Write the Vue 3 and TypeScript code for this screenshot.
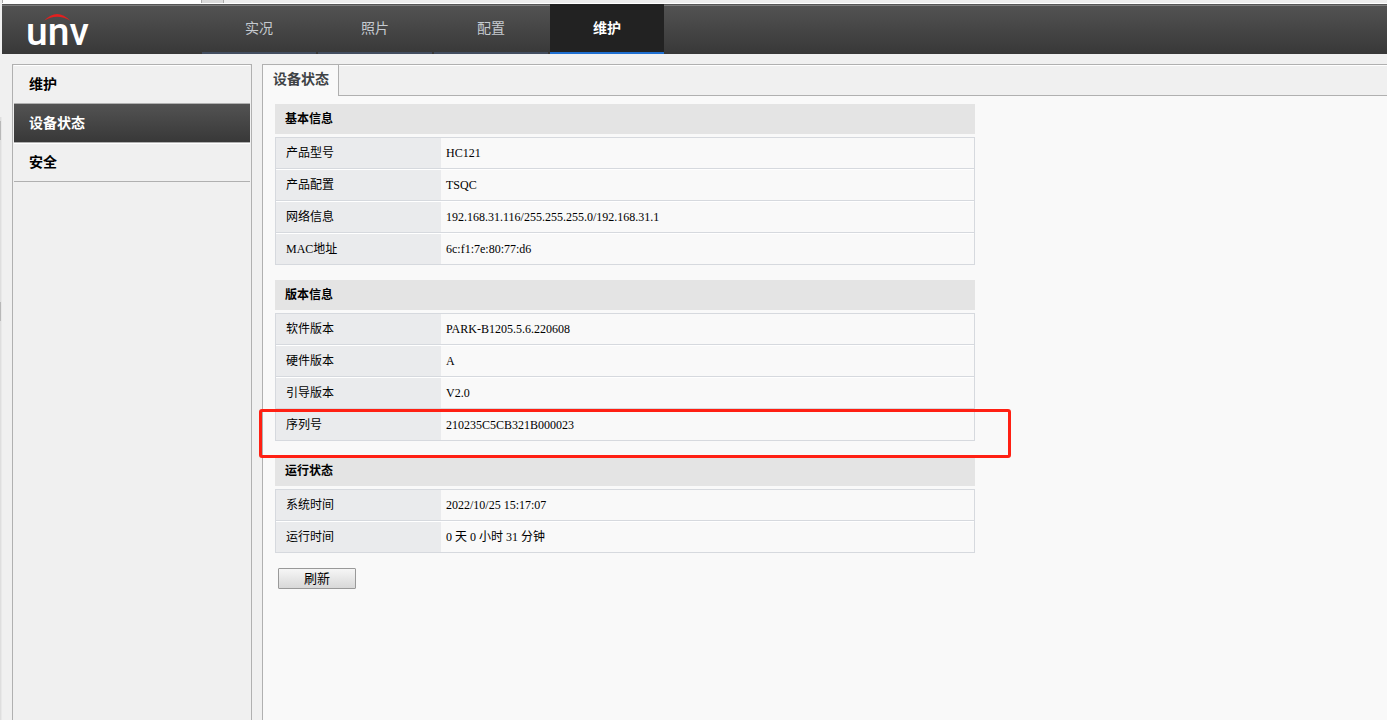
<script setup lang="ts">
import { ref } from 'vue'

interface Row {
  label: string
  value: string
}
interface Section {
  title: string
  rows: Row[]
  marked?: boolean
}

const navItems: string[] = ['实况', '照片', '配置', '维护']
const activeNav = ref('维护')

const menuItems: string[] = ['维护', '设备状态', '安全']
const activeMenu = ref('设备状态')

const sections: Section[] = [
  {
    title: '基本信息',
    rows: [
      { label: '产品型号', value: 'HC121' },
      { label: '产品配置', value: 'TSQC' },
      { label: '网络信息', value: '192.168.31.116/255.255.255.0/192.168.31.1' },
      { label: 'MAC地址', value: '6c:f1:7e:80:77:d6' },
    ],
  },
  {
    title: '版本信息',
    marked: true,
    rows: [
      { label: '软件版本', value: 'PARK-B1205.5.6.220608' },
      { label: '硬件版本', value: 'A' },
      { label: '引导版本', value: 'V2.0' },
      { label: '序列号', value: '210235C5CB321B000023' },
    ],
  },
  {
    title: '运行状态',
    rows: [
      { label: '系统时间', value: '2022/10/25 15:17:07' },
      { label: '运行时间', value: '0 天 0 小时 31 分钟' },
    ],
  },
]
</script>

<template>
  <div class="page">
    <div class="strip"><span class="strip-field"></span><span class="strip-button"></span></div>
    <header class="header">
      <svg class="logo" width="200" height="50" viewBox="2 4 200 50" role="img" aria-label="unv">
        <text class="logo-text" x="26" y="45">unv</text>
        <path d="M44 20.8 Q57 7 70.4 20.8 Q57 12.8 44 20.8 Z" fill="#e3201f" />
      </svg>
      <nav class="nav">
        <a
          v-for="item in navItems"
          :key="item"
          href="#"
          class="nav-item"
          :class="{ active: item === activeNav }"
          @click.prevent="activeNav = item"
        >{{ item }}</a>
      </nav>
    </header>

    <div class="body">
      <div class="gutter"><i class="mark"></i><i class="mark"></i></div>
      <aside class="sidebar">
        <a
          v-for="item in menuItems"
          :key="item"
          href="#"
          class="menu-item"
          :class="{ active: item === activeMenu }"
          @click.prevent="activeMenu = item"
        >{{ item }}</a>
      </aside>

      <main class="main">
        <div class="tabs">
          <a href="#" class="tab" @click.prevent>设备状态</a>
          <div class="tabs-rest"></div>
        </div>
        <div class="content">
          <section v-for="s in sections" :key="s.title" class="section">
            <h2 class="title">{{ s.title }}</h2>
            <table class="info">
              <tbody>
                <tr v-for="r in s.rows" :key="r.label">
                  <th scope="row">{{ r.label }}</th>
                  <td>{{ r.value }}</td>
                </tr>
              </tbody>
            </table>
            <div v-if="s.marked" class="highlight"></div>
          </section>
          <button type="button" class="refresh">刷新</button>
        </div>
      </main>
    </div>
  </div>
</template>

<style>
html,
body,
#app {
  height: 100%;
}
body {
  margin: 0;
  background: #f0f0f0;
}
</style>

<style scoped>
.page {
  box-sizing: border-box;
  min-height: 100%;
  display: flex;
  flex-direction: column;
  overflow: hidden;
  background: #f0f0f0;
  font-family: "Liberation Serif", "Noto Sans CJK SC", serif;
  font-size: 12px;
  color: #000;
}
.strip {
  display: flex;
  height: 3px;
  margin-left: 2px;
  border-bottom: 1px solid #fff;
  background: #ececec;
}
.strip-field {
  box-sizing: border-box;
  width: 199px;
  border-left: 1px solid #aaa;
  background: #fff;
}
.strip-button {
  box-sizing: border-box;
  width: 23px;
  border: 0 solid #aaa;
  border-width: 0 1px;
  background: #dadada;
}
.header {
  box-sizing: border-box;
  display: flex;
  height: 50px;
  margin-left: 2px;
  background: linear-gradient(#555 0 1px, #7c7c7c 1px 2px, #525252 2px, #383838);
}
.logo {
  flex: none;
}
.logo-text {
  font-family: Roboto, sans-serif;
  font-size: 39px;
  font-weight: 500;
  fill: #fff;
}
.nav {
  display: flex;
  gap: 2px;
}
.nav-item {
  box-sizing: border-box;
  width: 114px;
  border-bottom: 2px solid #434e60;
  color: #c5cad0;
  font-size: 14px;
  line-height: 50px;
  text-align: center;
  text-decoration: none;
}
.nav-item.active {
  background: #222;
  border-bottom-color: #1f6fd0;
  color: #fff;
  font-weight: bold;
}
.body {
  flex: 1;
  display: flex;
  padding-top: 10px;
}
.gutter {
  box-sizing: border-box;
  width: 2px;
  margin: 53px 10px 0 0;
  border-right: 1px solid #e8e8e8;
  background: #dedede;
}
.mark {
  display: block;
  height: 19px;
  margin: 4px 0 162px;
  background: #b8b8b8;
}
.sidebar {
  box-sizing: border-box;
  width: 240px;
  flex: none;
  margin-right: 10px;
  padding: 0 1px;
  border: 1px solid #b0b0b0;
  border-bottom: 0;
}
.menu-item {
  display: block;
  height: 37px;
  padding-left: 15px;
  border-top: 1px solid #fff;
  border-bottom: 1px solid #b0b0b0;
  color: #000;
  font-size: 14px;
  font-weight: bold;
  line-height: 37px;
  text-decoration: none;
}
.menu-item.active {
  border-top-color: #525252;
  background: linear-gradient(#525252, #383838);
  color: #fff;
}
.main {
  flex: 1;
  min-width: 0;
  border-left: 1px solid #b0b0b0;
  border-top: 1px solid #b0b0b0;
  background: #f9f9f9;
}
.tabs {
  display: flex;
  height: 31px;
}
.tab {
  padding: 0 9px 0 10px;
  border-right: 1px solid #b0b0b0;
  color: #404346;
  font-size: 14px;
  font-weight: bold;
  line-height: 29px;
  text-decoration: none;
}
.tabs-rest {
  flex: 1;
  border-top: 1px solid #fff;
  border-bottom: 1px solid #b0b0b0;
  background: #f0f0f0;
}
.content {
  max-width: 700px;
  padding: 8px 12px;
}
.section {
  position: relative;
  margin-bottom: 15px;
}
.title {
  margin: 0 0 3px;
  padding-left: 10px;
  background: #e4e4e4;
  font-size: 12px;
  font-weight: bold;
  line-height: 30px;
}
.info {
  width: 100%;
  border: 1px solid #d6d9de;
  border-spacing: 0;
  table-layout: fixed;
}
.info th,
.info td {
  box-sizing: border-box;
  height: 32px;
  padding: 0;
  border-top: 1px solid #fff;
  border-bottom: 1px solid #d6d9de;
  line-height: 30px;
  text-align: left;
  white-space: nowrap;
}
.info th {
  width: 165px;
  padding-left: 10px;
  background: #eaebed;
  font-weight: normal;
}
.info td {
  padding-left: 5px;
}
.info tr:first-child > * {
  height: 31px;
  border-top: 0;
}
.info tr:last-child > * {
  height: 31px;
  border-bottom: 0;
}
.highlight {
  position: absolute;
  z-index: 1;
  box-sizing: border-box;
  left: -16px;
  right: -36px;
  bottom: -17px;
  height: 49px;
  border: 3px solid #ff2013;
  border-radius: 3px;
  pointer-events: none;
}
.refresh {
  display: block;
  width: 78px;
  height: 21px;
  margin-left: 3px;
  padding: 0;
  border: 1px solid #999;
  border-radius: 1px;
  background: linear-gradient(#f6f6f6, #d8d8d8);
  color: #000;
  font-family: "Liberation Serif", "Noto Sans CJK SC", serif;
  font-size: 13px;
  line-height: 19px;
}
</style>
